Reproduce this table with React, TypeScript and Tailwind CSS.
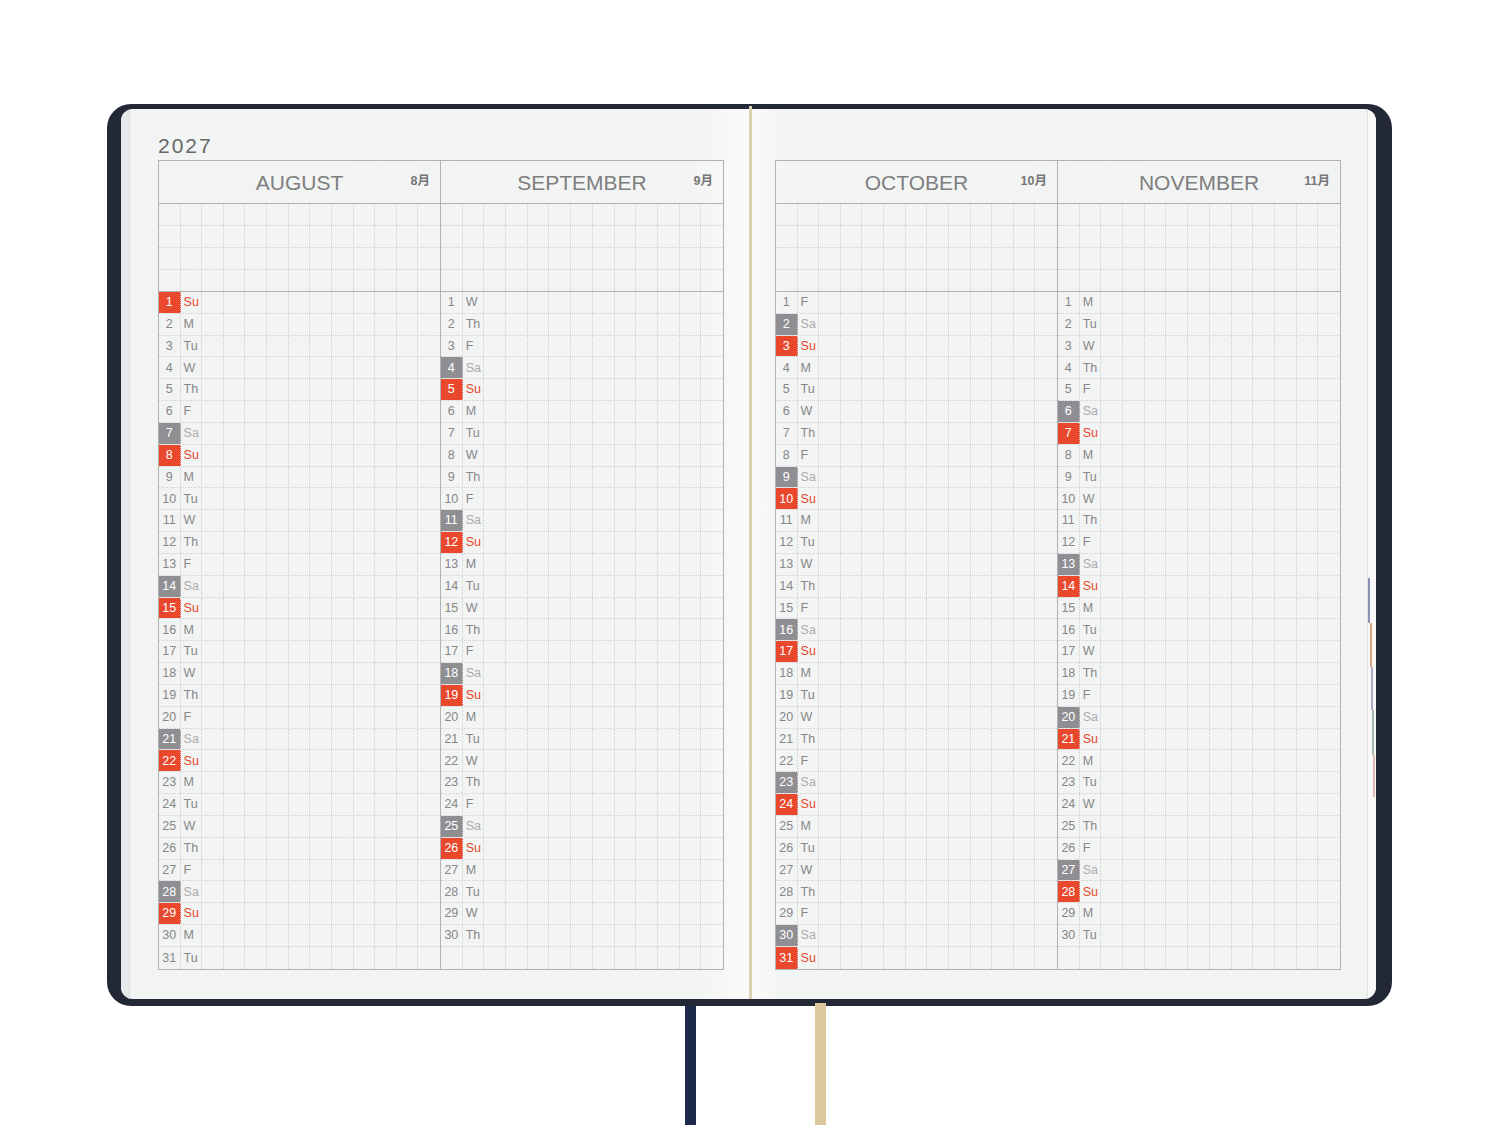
import React from "react";

const WEEKDAYS = ["Su", "M", "Tu", "W", "Th", "F", "Sa"];

const LEFT_MONTHS = [
    {name: "AUGUST", jp: "8月", month: 7},
    {name: "SEPTEMBER", jp: "9月", month: 8},
];
const RIGHT_MONTHS = [
    {name: "OCTOBER", jp: "10月", month: 9},
    {name: "NOVEMBER", jp: "11月", month: 10},
];

const DOT = "border-dotted border-[#d0d0d0]";

function EmptyCells({count}: {count: number}) {
    return (
        <>
            {Array.from({length: count}).map((_, i) => (
                <div key={i} className={i === count - 1 ? "" : `border-r ${DOT}`}/>
            ))}
        </>
    );
}

function BlankRow({solid}: {solid?: boolean}) {
    return (
        <div
            className={`grid grid-cols-[repeat(13,minmax(0,1fr))] h-[22px] border-b ${
                solid ? "border-solid border-[#b2b2b2]" : DOT
            }`}
        >
            <EmptyCells count={13}/>
        </div>
    );
}

function DateRow({day, month, last}: {day: number | null; month: number; last: boolean}) {
    const wd = day ? new Date(2027, month, day).getDay() : -1;
    const numCls =
        wd === 0 ? "bg-[#e9482c] text-white" : wd === 6 ? "bg-[#8f8f93] text-white" : "text-[#878787]";
    const wdCls = wd === 0 ? "text-[#e9482c]" : wd === 6 ? "text-[#acacac]" : "text-[#878787]";

    return (
        <div
            className={`grid grid-cols-[repeat(13,minmax(0,1fr))] h-[21.84px] text-[12.5px] leading-none ${
                last ? "" : `border-b ${DOT}`
            }`}
        >
            <div className={`border-r ${DOT} flex items-center justify-center ${numCls}`}>{day}</div>
            <div className={`border-r ${DOT} flex items-center pl-[3px] whitespace-nowrap ${wdCls}`}>
                {wd >= 0 ? WEEKDAYS[wd] : ""}
            </div>
            <EmptyCells count={11}/>
        </div>
    );
}

function MonthPanel({name, jp, month, first}: {name: string; jp: string; month: number; first: boolean}) {
    const days = new Date(2027, month + 1, 0).getDate();

    return (
        <div className={`w-[282px] flex flex-col ${first ? "border-r border-[#b2b2b2]" : ""}`}>
            <div className="h-[43px] border-b border-[#b2b2b2] grid grid-cols-[1fr_auto_1fr] items-center">
                <div/>
                <span className="text-[21px] leading-none text-[#7e7e7e]">{name}</span>
                <span className="justify-self-end pr-[10px] pb-[2px] text-[12.5px] font-bold text-[#767676] leading-none">
                    {jp}
                </span>
            </div>

            <BlankRow/>
            <BlankRow/>
            <BlankRow/>
            <BlankRow solid/>

            {Array.from({length: 31}).map((_, i) => (
                <DateRow key={i} day={i < days ? i + 1 : null} month={month} last={i === 30}/>
            ))}
        </div>
    );
}

function Spread({months}: {months: typeof LEFT_MONTHS}) {
    return (
        <div className="flex w-fit border border-[#b2b2b2]">
            {months.map((m, i) => (
                <MonthPanel key={m.name} name={m.name} jp={m.jp} month={m.month} first={i === 0}/>
            ))}
        </div>
    );
}

export default function App() {
    return (
        <div className="w-[1500px] h-[1125px] bg-white overflow-hidden font-['Liberation_Sans','Noto_Sans_CJK_JP',sans-serif]">
            <div className="pt-[104px] pl-[107px]">
                {/* cover */}
                <div className="w-[1285px] h-[902px] bg-[#232836] rounded-[24px] flex pl-[14px] pr-[16px] pt-[5px] pb-[7px]">
                    {/* left page */}
                    <div className="w-[628px] flex rounded-l-[12px] overflow-hidden bg-[linear-gradient(to_right,#f2f3f3_0%,#f3f4f4_92%,#fafafa_100%)]">
                        <div className="w-[9px] bg-[#e8e9ea] border-r border-[#dcdddf]"/>
                        <div className="pl-[28px] flex flex-col">
                            <div className="h-[51px] pt-[26px] text-[21px] leading-[21px] tracking-[2px] text-[#696969]">
                                2027
                            </div>
                            <Spread months={LEFT_MONTHS}/>
                        </div>
                    </div>

                    {/* spine */}
                    <div className="w-[3px] -mt-[3px] bg-[#ddd0b2]"/>

                    {/* right page */}
                    <div className="w-[624px] flex rounded-r-[12px] overflow-hidden bg-[linear-gradient(to_right,#fafafa_0%,#f3f4f4_5%,#f2f3f3_100%)]">
                        <div className="pl-[23px] pt-[51px] flex-1">
                            <Spread months={RIGHT_MONTHS}/>
                        </div>
                        <div className="w-[9px] bg-[#f9f9f9] border-l border-[#e2e3e4] flex flex-col pt-[469px]">
                            <div className="w-[2px] h-[45px] bg-[#8a90b6]"/>
                            <div className="w-[2px] h-[44px] ml-[2px] bg-[#d9a584]"/>
                            <div className="w-[2px] h-[43px] ml-[3px] bg-[#b6a8c8]"/>
                            <div className="w-[2px] h-[45px] ml-[4px] bg-[#9fb8a8]"/>
                            <div className="w-[2px] h-[42px] ml-[5px] bg-[#e6b7b4]"/>
                        </div>
                    </div>
                </div>

                {/* ribbons */}
                <div className="flex h-[119px]">
                    <div className="ml-[578px] w-[11px] bg-[#1c2949]"/>
                    <div className="ml-[119px] w-[11px] -mt-[3px] bg-[#dcc89d]"/>
                </div>
            </div>
        </div>
    );
}
